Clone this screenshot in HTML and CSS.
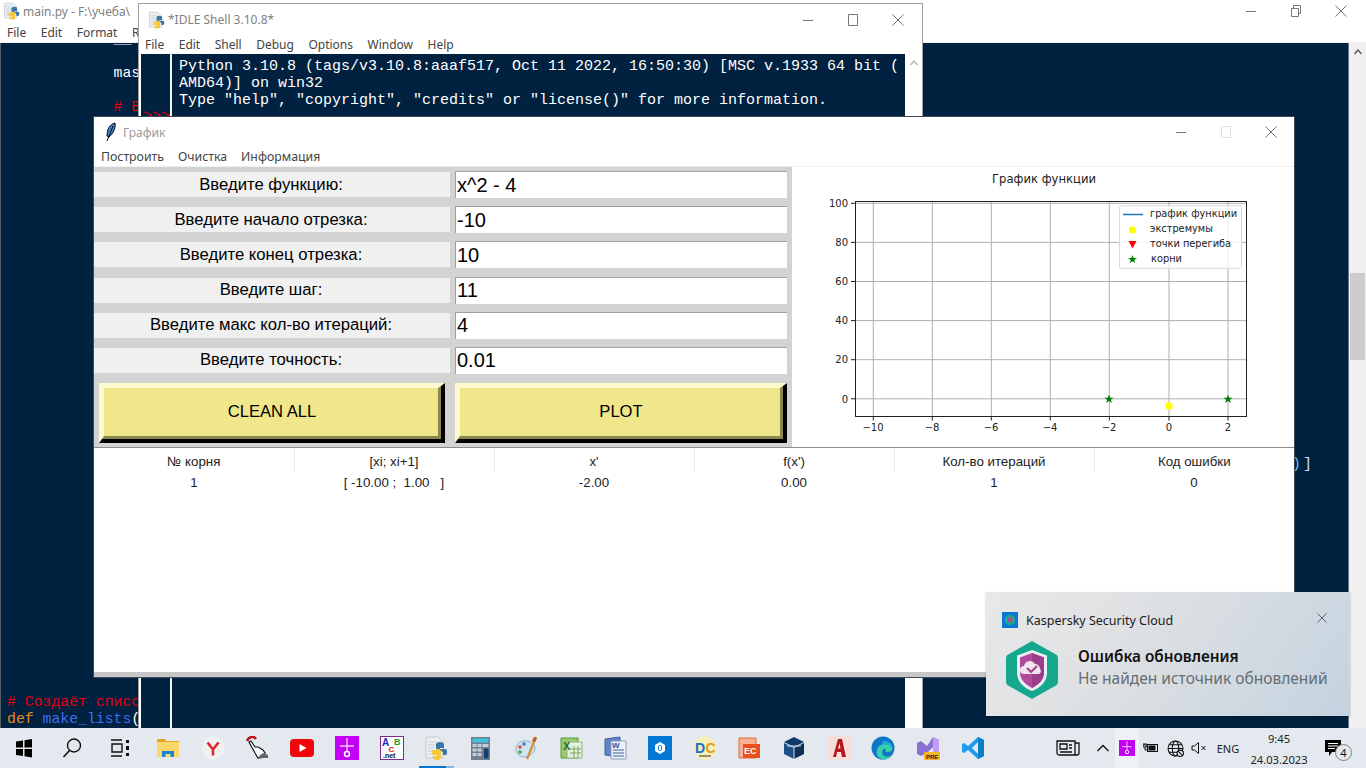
FILE: index.html
```html
<!DOCTYPE html>
<html>
<head>
    <meta charset="UTF-8">
    <title>График</title>
    <link rel="stylesheet" href="styles.css">
</head>
<body>
    <svg class="defs" width="0" height="0">
        <symbol id="ico-min" viewBox="0 0 12 12"><path d="M1 6.5h10" stroke="currentColor" fill="none"/></symbol>
        <symbol id="ico-max" viewBox="0 0 12 12"><path d="M1.5 .5h9v11h-9z" stroke="currentColor" fill="none"/></symbol>
        <symbol id="ico-restore" viewBox="0 0 12 12"><path d="M1.5 3.5h7v8h-7zM3.5 3.5v-3h7v8h-2" stroke="currentColor" fill="none"/></symbol>
        <symbol id="ico-close" viewBox="0 0 12 12"><path d="M.5 .5l11 11M11.5 .5l-11 11" stroke="currentColor" fill="none"/></symbol>
        <symbol id="ico-up" viewBox="0 0 8 6"><path d="M.5 5L4 1l3.500 4" stroke="currentColor" stroke-width="1.300" fill="none"/></symbol>
        <symbol id="ico-py" viewBox="0 0 24 24">
            <path d="M2 1h12l5 5v16H2z" fill="#eceff2" stroke="#c4c8cc"/>
            <path d="M4 6h8M4 9h9M4 12h6M4 15h6M4 18h6" stroke="#c8ccd0"/>
            <path d="M12 9c0-2 1-3 4-3s4 1 4 3v3h-4v1h5c1 0 2 0 2 3s-1 3-2 3h-2v-2c0-1-1-2-2-2h-3c-1 0-2-1-2-2z" fill="#3a75a8"/>
            <path d="M8 14h4v-1h-1l4 0c1 0 2 1 2 2v6c0 2-1 3-4 3s-4-1-4-3v-1h4v-1H9c-1 0-1-1-1-2z" fill="#f6c83c"/>
        </symbol>
        <symbol id="ico-scissors" viewBox="0 0 24 24">
            <rect width="24" height="24" fill="#c400f5"/>
            <path d="M12 2v13M5 10h14" stroke="#f3c5ff" stroke-width="1.5"/>
            <circle cx="12" cy="18" r="2.5" fill="none" stroke="#fff" stroke-width="1.5"/>
        </symbol>
    </svg>

    <div class="desktop">
        <section class="window editor-win">
            <div class="titlebar">
                <svg class="title-ico"><use href="#ico-py"/></svg>
                <span class="title-text">main.py - F:\учеба\</span>
                <div class="controls">
                    <svg class="ctl"><use href="#ico-min"/></svg>
                    <svg class="ctl"><use href="#ico-restore"/></svg>
                    <svg class="ctl"><use href="#ico-close"/></svg>
                </div>
            </div>
            <nav class="menu editor-menu"><span>File</span><span>Edit</span><span>Format</span><span>Run</span></nav>
            <div class="code-row">
                <div class="code-clip">
                    <pre class="code">            __

            mas

            <span class="red"># В</span>




















<span class="line-end"><span class="cyan">)</span>]</span>












<span class="red"># Создаёт список</span>
<span class="orange">def</span> <span class="blue">make_lists</span>(</pre>
                </div>
                <div class="scrollbar editor-scroll">
                    <svg class="arrow"><use href="#ico-up"/></svg>
                    <div class="thumb"></div>
                </div>
            </div>
        </section>

        <section class="window idle-win">
            <div class="titlebar">
                <svg class="title-ico"><use href="#ico-py"/></svg>
                <span class="title-text">*IDLE Shell 3.10.8*</span>
                <div class="controls">
                    <svg class="ctl"><use href="#ico-min"/></svg>
                    <svg class="ctl"><use href="#ico-max"/></svg>
                    <svg class="ctl"><use href="#ico-close"/></svg>
                </div>
            </div>
            <nav class="menu idle-menu"><span>File</span><span>Edit</span><span>Shell</span><span>Debug</span><span>Options</span><span>Window</span><span>Help</span></nav>
            <div class="shell-row">
                <div class="shell-side"><span class="red prompt">&gt;&gt;&gt;</span></div>
                <pre class="shell">Python 3.10.8 (tags/v3.10.8:aaaf517, Oct 11 2022, 16:50:30) [MSC v.1933 64 bit (
AMD64)] on win32
Type "help", "copyright", "credits" or "license()" for more information.</pre>
                <div class="scrollbar idle-scroll"><svg class="arrow"><use href="#ico-up"/></svg></div>
            </div>
        </section>

        <section class="window graph-win">
            <div class="titlebar graph-title">
                <svg class="feather" viewBox="0 0 12 20">
                    <path d="M10 1C5 2 2 7 2 14l2 1C8 12 11 6 10 1z" fill="#3f7fd0" stroke="#0a0a0a"/>
                    <path d="M8 4L2 19" stroke="#0a0a0a"/>
                </svg>
                <span class="title-text">График</span>
                <div class="controls">
                    <svg class="ctl"><use href="#ico-min"/></svg>
                    <svg class="ctl ctl-off"><use href="#ico-max"/></svg>
                    <svg class="ctl"><use href="#ico-close"/></svg>
                </div>
            </div>
            <nav class="menu graph-menu"><span>Построить</span><span>Очистка</span><span>Информация</span></nav>

            <div class="graph-body">
                <div class="form">
                    <div class="label">Введите функцию:</div><div class="entry">x^2 - 4</div>
                    <div class="label">Введите начало отрезка:</div><div class="entry">-10</div>
                    <div class="label">Введите конец отрезка:</div><div class="entry">10</div>
                    <div class="label">Введите шаг:</div><div class="entry">11</div>
                    <div class="label">Введите макс кол-во итераций:</div><div class="entry">4</div>
                    <div class="label">Введите точность:</div><div class="entry">0.01</div>
                    <div class="btn btn-clean"><div class="btn-face">CLEAN ALL</div></div>
                    <div class="btn"><div class="btn-face">PLOT</div></div>
                </div>

                <svg class="chart" viewBox="792 167 502 280">
                    <text class="chart-title" x="1044" y="183">График функции</text>
                    <g class="grid">
                        <path d="M873.300 202V416M932.300 202V416M991.300 202V416M1050.300 202V416M1109.300 202V416M1169 202V416M1228 202V416"/>
                        <path d="M855 203.300H1246M855 242.400H1246M855 281.500H1246M855 320.600H1246M855 359.700H1246M855 398.800H1246"/>
                    </g>
                    <rect class="axes" x="855.500" y="201.500" width="391" height="215"/>
                    <path class="ticks" d="M873.300 416.500v4M932.300 416.500v4M991.300 416.500v4M1050.300 416.500v4M1109.300 416.500v4M1169 416.500v4M1228 416.500v4M855 203.300h-4M855 242.400h-4M855 281.500h-4M855 320.600h-4M855 359.700h-4M855 398.800h-4"/>
                    <g class="xlabels">
                        <text x="873" y="431">−10</text><text x="932" y="431">−8</text><text x="991" y="431">−6</text>
                        <text x="1050" y="431">−4</text><text x="1109" y="431">−2</text><text x="1169" y="431">0</text><text x="1228" y="431">2</text>
                    </g>
                    <g class="ylabels">
                        <text x="848" y="207">100</text><text x="848" y="246">80</text><text x="848" y="285">60</text>
                        <text x="848" y="324">40</text><text x="848" y="363">20</text><text x="848" y="403">0</text>
                    </g>
                    <circle class="extremum" cx="1169" cy="406" r="3.700"/>
                    <polygon class="root" points="1109,394.500 1110.200,397.700 1113.600,397.700 1110.900,399.800 1111.900,403 1109,401.100 1106.100,403 1107.100,399.800 1104.400,397.700 1107.800,397.700"/>
                    <polygon class="root" points="1228,394.500 1229.200,397.700 1232.600,397.700 1229.900,399.800 1230.900,403 1228,401.100 1225.100,403 1226.100,399.800 1223.400,397.700 1226.800,397.700"/>
                    <rect class="legend" x="1119.500" y="205.800" width="122" height="62.500" rx="2"/>
                    <path class="legend-line" d="M1123 214.500H1143"/>
                    <circle class="extremum" cx="1132.500" cy="230" r="3.500"/>
                    <polygon class="inflect" points="1128.500,241 1136.500,241 1132.500,248.500"/>
                    <polygon class="root" points="1132.500,255 1133.700,258 1137,258 1134.300,260 1135.300,263 1132.500,261.200 1129.700,263 1130.700,260 1128,258 1131.300,258"/>
                    <g class="legend-text">
                        <text x="1150" y="217">график функции</text>
                        <text x="1150" y="232">экстремумы</text>
                        <text x="1150" y="247">точки перегиба</text>
                        <text x="1151" y="262">корни</text>
                    </g>
                </svg>
            </div>

            <table class="results">
                <tr class="results-head">
                    <th>№ корня</th><th>[xi; xi+1]</th><th>x'</th><th>f(x')</th><th>Кол-во итераций</th><th>Код ошибки</th>
                </tr>
                <tr>
                    <td>1</td><td>[ -10.00 ;&nbsp; 1.00 &nbsp; ]</td><td>-2.00</td><td>0.00</td><td>1</td><td>0</td>
                </tr>
            </table>
        </section>

        <aside class="toast">
            <div class="toast-head">
                <svg class="toast-app" viewBox="0 0 16 16">
                    <rect width="16" height="16" fill="#0a78d2"/>
                    <path d="M8 2.500l5 2.700v5.600l-5 2.700-5-2.700V5.200z" fill="#1fa88c"/>
                    <path d="M5.500 5.500h5v3.500L8 11 5.500 9z" fill="#b04a9c"/>
                </svg>
                <span class="toast-name">Kaspersky Security Cloud</span>
                <svg class="toast-close" viewBox="0 0 12 12"><path d="M1.500 1.500l9 9M10.500 1.500l-9 9" stroke="#5a6570" fill="none"/></svg>
            </div>
            <div class="toast-main">
                <svg class="toast-logo" viewBox="0 0 52 58">
                    <path d="M26 0l23 13c2 1 3 2 3 5v22c0 3-1 4-3 5L26 58 3 45c-2-1-3-2-3-5V18c0-3 1-4 3-5z" fill="#16a88e"/>
                    <path d="M26 9l15 5.500v17C41 41 34 47 26 50c-8-3-15-9-15-18.500v-17z" fill="#e9eef0"/>
                    <path d="M26 12l12 4.500v15C38 39 32 44 26 47c-6-3-12-8-12-15.500v-15z" fill="#b14a9d"/>
                    <path d="M26 12l12 4.500v15C38 39 32 44 26 47z" fill="#9c3d8b"/>
                    <path d="M18 33a4 4 0 0 1 0-8 6 6 0 0 1 11-2 5 5 0 0 1 5 5 3 3 0 0 1-1 5z" fill="#f0e6f0"/>
                    <path d="M21 27l4 4 6-6" stroke="#a8428f" stroke-width="2.200" fill="none"/>
                </svg>
                <div class="toast-text">
                    <div class="toast-title">Ошибка обновления</div>
                    <div class="toast-msg">Не найден источник обновлений</div>
                </div>
            </div>
        </aside>
    </div>

    <footer class="taskbar">
        <div class="start">
            <div class="tb-btn"><svg class="tb-ico" viewBox="0 0 24 24"><path d="M4 5.500l7-1v7H4zM12.500 4.300L20 3v8.500h-7.500zM4 13h7v7l-7-1zM12.500 13H20v8.500l-7.500-1.200z" fill="#000"/></svg></div>
            <div class="tb-btn"><svg class="tb-ico" viewBox="0 0 24 24"><circle cx="14" cy="9.500" r="6.500" fill="none" stroke="#111" stroke-width="1.400"/><path d="M9.500 14.500L3.500 21" stroke="#111" stroke-width="1.600"/></svg></div>
            <div class="tb-btn"><svg class="tb-ico" viewBox="0 0 24 24"><path d="M3 4h11M3 20h11M4 8h10v8H4z" fill="none" stroke="#111" stroke-width="1.400"/><path d="M18 4h3v3h-3zM18 10h3v4h-3zM18 17h3v3h-3z" fill="#111"/></svg></div>
        </div>
        <div class="apps">
            <div class="tb-app"><svg class="tb-ico" viewBox="0 0 24 24"><path d="M1 4c0-1 1-1 2-1h6l1 2h13v4H1z" fill="#e0a526"/><path d="M1 6h22v15H1z" fill="#fcd76b"/><path d="M6 15h12v6H6z" fill="#1a86d8"/><path d="M9.500 18h5v3h-5z" fill="#fcd76b"/></svg></div>
            <div class="tb-app"><svg class="tb-ico" viewBox="0 0 24 24"><circle cx="12" cy="12" r="11.500" fill="#f1f1f1"/><path d="M6.500 6.500l5.500 7 5.500-7M12 13v6.500" fill="none" stroke="#e3262a" stroke-width="2.600"/></svg></div>
            <div class="tb-app"><svg class="tb-ico" viewBox="0 0 24 24"><path d="M1 5C3 0 8 0 10 3" fill="none" stroke="#b8151a" stroke-width="2.600"/><path d="M3 6l2-1 4 6 3 0 5 3 2 3v4l-7 1-3-5z" fill="#fff" stroke="#111" stroke-width="1.200"/><path d="M13 20l4-3 5 2v3H13z" fill="#666"/></svg></div>
            <div class="tb-app"><svg class="tb-ico" viewBox="0 0 24 24"><rect y="3" width="24" height="18" rx="4" fill="#f0060b"/><path d="M9.500 8l7 4-7 4z" fill="#fff"/></svg></div>
            <div class="tb-app"><svg class="tb-ico"><use href="#ico-scissors"/></svg></div>
            <div class="tb-app">
                <svg class="tb-ico" viewBox="0 0 24 24">
                    <rect x=".5" y=".5" width="23" height="23" fill="#fff" stroke="#7a2a90"/>
                    <text class="ab-a" x="2" y="10">A</text><text class="ab-b" x="14" y="9">B</text><text class="ab-c" x="8.500" y="16">C</text><text class="ab-net" x="3" y="22">.net</text>
                </svg>
            </div>
            <div class="tb-app tb-active"><svg class="tb-ico"><use href="#ico-py"/></svg></div>
            <div class="tb-app"><svg class="tb-ico" viewBox="0 0 24 24"><rect x="2" y="1" width="19" height="23" fill="#70808e"/><rect x="3.500" y="2.500" width="16" height="4" fill="#3fc2dd"/><path d="M3.500 8h4v3h-4zM8.500 8h4v3h-4zM13.500 8h6v3h-6zM3.500 12.500h4v3h-4zM8.500 12.500h4v3h-4zM3.500 17h4v3h-4zM8.500 17h4v3h-4z" fill="#c5ced6"/><path d="M15 12.500h4.500v10H15z" fill="#123f70"/></svg></div>
            <div class="tb-app"><svg class="tb-ico" viewBox="0 0 24 24"><path d="M2 14C1 8 7 4 13 5c5 1 8 3 8 7 0 5-6 9-11 9-4 0-7-3-8-7z" fill="#cfe3f0" stroke="#8fb0c8"/><circle cx="6" cy="11" r="1.800" fill="#e04a3a"/><circle cx="6" cy="16" r="1.800" fill="#45a845"/><circle cx="10" cy="8" r="1.800" fill="#3a80d0"/><path d="M22 1l-9 22" stroke="#d09030" stroke-width="2.200"/><path d="M20 1l3 1-2 4-3-1z" fill="#c25a2a"/></svg></div>
            <div class="tb-app"><svg class="tb-ico" viewBox="0 0 24 24"><path d="M2 2h17v20H2z" fill="#9ccb6a" stroke="#4f9a38"/><path d="M8 6h15v16H8z" fill="#e6eee0" stroke="#9ab08c"/><path d="M11 13h11M11 17h11M15 10v12M19 10v12" stroke="#7dab5e"/><text class="xl" x="4" y="14">X</text></svg></div>
            <div class="tb-app"><svg class="tb-ico" viewBox="0 0 24 24"><path d="M2 3l15-2v20l-15-2z" fill="#5c86c8" stroke="#3a60a0"/><path d="M8 5h15v18H8z" fill="#eef1f8" stroke="#8a9cc0"/><path d="M10 14h11M10 17h11M10 20h11" stroke="#3a60a0"/><text class="wd" x="9" y="12">W</text></svg></div>
            <div class="tb-app"><svg class="tb-ico" viewBox="0 0 24 24"><rect width="24" height="24" fill="#0078d4"/><path d="M12 6l5 3v6l-5 3-5-3V9z" fill="#fff"/><rect x="10.500" y="9.500" width="3" height="5" rx="1" fill="none" stroke="#0078d4"/></svg></div>
            <div class="tb-app"><svg class="tb-ico" viewBox="0 0 24 24"><circle cx="12" cy="12" r="11.500" fill="#f6f0b8"/><text class="dc-d" x="2" y="17">D</text><text class="dc-c" x="12.500" y="17">C</text><path d="M6 20h12" stroke="#333"/></svg></div>
            <div class="tb-app"><svg class="tb-ico" viewBox="0 0 24 24"><path d="M2 2h17v20H2z" fill="#f8b090" stroke="#e06a3a"/><path d="M6 8h17v14H6z" fill="#e8501c"/><text class="pp" x="7" y="18">EC</text></svg></div>
            <div class="tb-app"><svg class="tb-ico" viewBox="0 0 24 24"><path d="M12 1l10 5-10 5L2 6z" fill="#123a68"/><path d="M2 7l10 5v11L2 18z" fill="#1d4f86"/><path d="M22 7l-10 5v11l10-5z" fill="#0f2f55"/><path d="M12 12v11M5 10l14 0" stroke="#d8e2ee"/></svg></div>
            <div class="tb-app"><svg class="tb-ico" viewBox="0 0 24 24"><rect width="24" height="24" fill="#f6ded8"/><path d="M6 21L11 3h4l4 18h-4l-1-5H10l-1 5zM11 12.500h2.500L12.500 7z" fill="#b3161e"/></svg></div>
            <div class="tb-app"><svg class="tb-ico" viewBox="0 0 24 24"><circle cx="12" cy="12" r="11.500" fill="#0f77c8"/><path d="M6 14c2-7 12-8 15-2 1 3-2 4-5 4-2 0-2-2-1-3-3-1-5 3-3 6 2 2 6 2 9 0-2 4-7 5-10 4-4-1-6-5-5-9z" fill="#38d0a8"/><path d="M12 5c5 0 8 2 10 7-2-3-7-4-11-3z" fill="#1fb0d8"/></svg></div>
            <div class="tb-app"><svg class="tb-ico" viewBox="0 0 24 24"><path d="M1 7l4-2 6 5 6-9 6 3v14l-3 1H17V11l-6 6-6 3-4-2z" fill="#8a6fd4"/><path d="M17 1l6 3v12h-6z" fill="#c49af0"/><rect x="8" y="16" width="16" height="8" rx="1" fill="#f5b720"/><text class="pre" x="10" y="22.500">PRE</text></svg></div>
            <div class="tb-app"><svg class="tb-ico" viewBox="0 0 24 24"><path d="M17 1l6 3v16l-6 3L7 14l-4 3-2-1V8l2-1 4 3z" fill="#1f9cf0"/><path d="M17 6l-6 6 6 6z" fill="#e4e9ef"/><path d="M17 1l6 3v16l-6 3z" fill="#0a7fc8"/></svg></div>
        </div>
        <div class="tray">
            <div class="tray-item"><svg class="tray-news" viewBox="0 0 24 16"><path d="M1 1h18v14H3a2 2 0 0 1-2-2zM19 3h4v10a2 2 0 0 1-2 2h-2M4 4h7v5H4zM13 5h3M13 8h3M4 12h12" fill="none" stroke="#111" stroke-width="1.300"/></svg></div>
            <div class="tray-item tray-chevron"><svg class="tray-ico" viewBox="0 0 16 16"><path d="M2.500 11L8 5.500l5.500 5.500" fill="none" stroke="#111" stroke-width="1.300"/></svg></div>
            <div class="tray-item tray-hot"><svg class="tray-ico"><use href="#ico-scissors"/></svg></div>
            <div class="tray-item"><svg class="tray-ico" viewBox="0 0 16 16"><path d="M1 3v2M3 3v2M0 5h4v2H0zM2 7v3h2" stroke="#111" fill="none"/><rect x="4.500" y="4.500" width="10" height="7" fill="none" stroke="#111"/><rect x="5.500" y="5.500" width="7" height="5" fill="#111"/></svg></div>
            <div class="tray-item"><svg class="tray-ico tray-globe" viewBox="0 0 16 16"><circle cx="8" cy="8" r="7" fill="none" stroke="#111"/><ellipse cx="8" cy="8" rx="3" ry="7" fill="none" stroke="#111"/><path d="M1 8h14M2 4.500h12M2 11.500h12" stroke="#111"/><circle cx="12.500" cy="12.500" r="3" fill="#e4e9ef" stroke="#111"/><path d="M10.500 10.500l4 4" stroke="#111"/></svg></div>
            <div class="tray-item"><svg class="tray-ico" viewBox="0 0 16 16"><path d="M1 6h2.500L7.500 2.500v11L3.500 10H1z" fill="none" stroke="#111"/><path d="M10.500 6l4 4M14.500 6l-4 4" stroke="#111"/></svg></div>
            <div class="tray-lang">ENG</div>
            <div class="tray-clock"><span>9:45</span><span>24.03.2023</span></div>
            <div class="tray-notify">
                <svg class="notify-ico" viewBox="0 0 17 17"><path d="M0 0h16v12H7l-3 4v-4H0z" fill="#000"/><path d="M3 3.500h10M3 6h10M3 8.500h7" stroke="#fff"/></svg>
                <span class="notify-count">4</span>
            </div>
        </div>
    </footer>
</body>
</html>
```

FILE: styles.css
```css
* {
    box-sizing: border-box;
}

body {
    margin: 0;
    width: 1366px;
    height: 768px;
    overflow: hidden;
    background-color: #00213f;
    font-family: "Noto Sans", sans-serif;
    display: flex;
    flex-direction: column;
}

.defs {
    position: absolute;
}

.desktop {
    position: relative;
    height: 728px;
    overflow: hidden;
}

/* windows sit on a free canvas */
.window {
    position: absolute;
    display: flex;
    flex-direction: column;
    background-color: #ffffff;
}

.editor-win {
    left: 0;
    top: 0;
    width: 1366px;
    height: 728px;
}

.idle-win {
    left: 138px;
    top: 3px;
    width: 785px;
    height: 725px;
    border: 1px solid #a0a0a0;
    border-bottom: 0;
}

.graph-win {
    left: 94px;
    top: 117px;
    width: 1200px;
    height: 560px;
    border-bottom: 5px solid #c6c6c6;
    box-shadow: 0 0 0 1px #3c4a58;
}

.titlebar {
    display: flex;
    align-items: center;
    height: 22px;
    flex-shrink: 0;
}

.editor-win .titlebar {
    padding-left: 3px;
}

.idle-win .titlebar {
    height: 31px;
    padding-left: 9px;
}

.title-ico {
    width: 17px;
    height: 18px;
}

.title-text {
    margin-left: 3px;
    font-size: 12px;
    color: #808080;
}

.controls {
    display: flex;
    margin-left: auto;
    margin-right: 19px;
    gap: 33px;
    color: #777777;
}

.idle-win .controls {
    margin-right: 18px;
}

.graph-win .controls {
    margin-right: 17px;
}

.ctl {
    width: 12px;
    height: 12px;
}

.ctl-off {
    color: #dddddd;
}

.menu {
    display: flex;
    flex-shrink: 0;
    font-size: 12px;
    color: #444444;
}

.editor-menu {
    height: 21px;
    padding-left: 7px;
    gap: 14.5px;
    align-items: center;
    border-bottom: 1px solid #f0f0f0;
}

.idle-menu {
    height: 19px;
    padding-left: 6px;
    gap: 14.5px;
    align-items: center;
}

.code-row {
    display: flex;
    flex: 1;
    min-height: 0;
}

.code-clip {
    flex: 1;
    overflow: hidden;
    background-color: #00213f;
    border-left: 1px solid #55606a;
    border-right: 1px solid #66727e;
}

.code {
    margin: -12px 0 0;
    padding-left: 6px;
    color: #ffffff;
    font-family: "Liberation Mono", monospace;
    font-size: 14.8px;
    line-height: 17px;
}

.red {
    color: #e00010;
}

.orange {
    color: #e58a1c;
}

.blue {
    color: #3f6df0;
}

.cyan {
    color: #6fc0f0;
}

.line-end {
    display: block;
    margin-left: 1285px;
    letter-spacing: 2px;
    color: #cfe6f6;
}

.scrollbar {
    position: relative;
    background-color: #f0f0f0;
    flex-shrink: 0;
}

.editor-scroll {
    width: 17px;
    color: #505050;
}

.thumb {
    position: absolute;
    left: 1px;
    right: 1px;
    top: 230px;
    height: 87px;
    background-color: #cdcdcd;
}

.arrow {
    display: block;
    width: 8px;
    height: 6px;
    margin: 6px auto 0;
}

.shell-row {
    display: flex;
    flex: 1;
    min-height: 0;
    padding-left: 1px;
}

.shell-side {
    width: 31px;
    overflow: hidden;
    background-color: #00213f;
    border-right: 2px solid #f2f2f2;
    margin-left: 1px;
}

.prompt {
    display: block;
    font-family: "Liberation Mono", monospace;
    font-size: 15px;
    line-height: 17px;
    padding: 54px 0 0 2px;
}

.shell {
    flex: 1;
    margin: 0;
    padding: 4px 0 0 7px;
    overflow: hidden;
    background-color: #00213f;
    color: #ffffff;
    font-family: "Liberation Mono", monospace;
    font-size: 15px;
    line-height: 17px;
}

.idle-scroll {
    width: 17px;
    color: #b0b0b0;
    background-color: #ffffff;
}

.graph-title {
    height: 30px;
    padding-left: 11px;
}

.feather {
    width: 12px;
    height: 20px;
}

.graph-title .title-text {
    margin-left: 6px;
    color: #999999;
}

.graph-menu {
    height: 19px;
    padding-left: 7px;
    gap: 14px;
    align-items: center;
    font-size: 12.3px;
}

.graph-body {
    display: flex;
    height: 282px;
    flex-shrink: 0;
    border-top: 1px solid #f0f0f0;
    border-bottom: 1px solid #8c8c8c;
}

.form {
    width: 698px;
    flex-shrink: 0;
    display: grid;
    grid-template-columns: 356px 332px;
    grid-auto-rows: 27px;
    column-gap: 5px;
    row-gap: 8.2px;
    padding-top: 4px;
    background-color: #d3d3d3;
}

.label {
    margin: 1px 0;
    padding-right: 2px;
    display: flex;
    align-items: center;
    justify-content: center;
    background-color: #f0f0f0;
    color: #000000;
    font-family: "Liberation Sans", sans-serif;
    font-size: 16.7px;
}

.entry {
    display: flex;
    align-items: center;
    padding-left: 1px;
    background-color: #ffffff;
    border-top: 1px solid #a0a0a0;
    border-left: 1px solid #a0a0a0;
    color: #000000;
    font-family: "Liberation Sans", sans-serif;
    font-size: 20px;
}

.btn {
    height: 60px;
    margin-top: 1px;
    border-style: solid;
    border-width: 3px 4px 4px 3px;
    border-color: #fffacd #000000 #000000 #fffacd;
}

.btn-clean {
    margin-left: 5px;
    margin-right: 5px;
}

.btn-face {
    height: 100%;
    padding-left: 2px;
    display: flex;
    align-items: center;
    justify-content: center;
    background-color: #f0e68c;
    border-style: solid;
    border-width: 2px 3px 3px 2px;
    border-color: #fffacd #8b864e #8b864e #fffacd;
    color: #000000;
    font-family: "Liberation Sans", sans-serif;
    font-size: 16.6px;
}

.chart {
    width: 502px;
    height: 280px;
    background-color: #ffffff;
}

.chart text {
    font-family: "DejaVu Sans", sans-serif;
    font-size: 10px;
    fill: #222222;
}

.chart .chart-title {
    font-size: 11.6px;
    text-anchor: middle;
}

.chart .legend-text text {
    font-size: 9.8px;
}

.grid path {
    stroke: #b0b0b0;
    fill: none;
}

.axes {
    fill: none;
    stroke: #222222;
}

.ticks {
    stroke: #222222;
    fill: none;
}

.xlabels text {
    text-anchor: middle;
}

.ylabels text {
    text-anchor: end;
}

.extremum {
    fill: #ffff00;
}

.root {
    fill: #008000;
}

.inflect {
    fill: #ff0000;
}

.legend {
    fill: #ffffff;
    fill-opacity: 0.8;
    stroke: #d8d8d8;
}

.legend-line {
    stroke: #1f77b4;
    stroke-width: 1.5;
    fill: none;
}

.results {
    width: 1200px;
    border-collapse: collapse;
    table-layout: fixed;
    font-family: "Liberation Sans", sans-serif;
    font-size: 13.3px;
    color: #222222;
}

.results th {
    height: 24px;
    padding: 2px 0 0;
    font-weight: normal;
    border-right: 1px solid #ececec;
    background-color: #ffffff;
}

.results th:last-child {
    border-right: 0;
}

.results td {
    height: 20px;
    padding: 0;
    text-align: center;
}

.toast {
    position: absolute;
    left: 986px;
    top: 592px;
    width: 364px;
    height: 124px;
    padding: 20px 16px 0;
    background: linear-gradient(125deg, #e8e8e8 0%, #dcdfe2 45%, #c3d3e0 100%);
    box-shadow: 0 1px 2px rgba(0, 0, 0, 0.25);
}

.toast-head {
    display: flex;
    align-items: center;
    height: 16px;
}

.toast-app {
    width: 16px;
    height: 16px;
}

.toast-name {
    margin-left: 8px;
    font-size: 12.5px;
    color: #1a1a1a;
}

.toast-close {
    margin-left: auto;
    margin-right: 6px;
    margin-top: -4px;
    width: 12px;
    height: 12px;
}

.toast-main {
    display: flex;
    align-items: center;
    margin-top: 13px;
    padding-left: 4px;
}

.toast-logo {
    width: 52px;
    height: 58px;
    flex-shrink: 0;
}

.toast-text {
    margin-left: 20px;
    margin-bottom: 6px;
}

.toast-title {
    font-size: 15.3px;
    font-weight: 600;
    color: #111111;
    line-height: 20px;
}

.toast-msg {
    margin-top: 2px;
    font-size: 15.5px;
    color: #666d73;
    line-height: 20px;
}

.taskbar {
    display: flex;
    height: 40px;
    background-color: #e4e9ef;
    color: #111111;
}

.start {
    display: flex;
    width: 146px;
}

.tb-btn {
    width: 48px;
    display: flex;
    align-items: center;
    justify-content: center;
}

.apps {
    display: flex;
}

.tb-app {
    position: relative;
    width: 44.7px;
    display: flex;
    align-items: center;
    justify-content: center;
}

.tb-ico {
    width: 24px;
    height: 24px;
}

.tb-active::after {
    content: "";
    position: absolute;
    left: 5px;
    right: 5px;
    bottom: 0;
    height: 2px;
    background: linear-gradient(to right, #0078d4 77%, #7db8e6 77%);
}

.tb-ico text {
    font-family: "Liberation Sans", sans-serif;
    font-weight: bold;
}

.ab-a {
    font-size: 10px;
    fill: #1a2fb0;
}

.ab-b {
    font-size: 9px;
    fill: #2a9a2a;
}

.ab-c {
    font-size: 8px;
    fill: #e01010;
}

.ab-net {
    font-size: 7px;
    fill: #111111;
}

.xl {
    font-size: 11px;
    fill: #1d6f2f;
}

.wd {
    font-size: 8px;
    fill: #2a52a0;
}

.dc-d {
    font-size: 14px;
    fill: #1a6fd0;
}

.dc-c {
    font-size: 14px;
    fill: #e09a20;
}

.pp {
    font-size: 9px;
    fill: #ffffff;
}

.pre {
    font-size: 6px;
    fill: #222222;
}

.tray {
    display: flex;
    margin-left: auto;
    margin-right: 9px;
    align-items: stretch;
}

.tray-item {
    width: 24px;
    display: flex;
    align-items: center;
    justify-content: center;
}

.tray-chevron {
    margin-left: 11px;
}

.tray-hot {
    background-color: #eff2f5;
}

.tray-ico {
    width: 16px;
    height: 16px;
}

.tray-news {
    width: 24px;
    height: 16px;
}

.tray-globe {
    width: 17px;
    height: 17px;
}

.tray-lang {
    width: 34px;
    display: flex;
    align-items: center;
    justify-content: center;
    font-size: 11px;
    color: #222222;
}

.tray-clock {
    width: 68px;
    display: flex;
    flex-direction: column;
    align-items: center;
    justify-content: center;
    gap: 5px;
    padding-top: 2px;
    font-size: 11.2px;
    line-height: 16px;
    color: #222222;
}

.tray-notify {
    position: relative;
    width: 44px;
    display: flex;
    align-items: center;
    justify-content: center;
}

.notify-ico {
    width: 17px;
    height: 17px;
    margin-right: 4px;
}

.notify-count {
    position: absolute;
    left: 22px;
    top: 16px;
    width: 17px;
    height: 17px;
    border-radius: 50%;
    border: 1px solid #808080;
    background-color: #e4e9ef;
    font-size: 11px;
    line-height: 15px;
    text-align: center;
    color: #111111;
}
```
